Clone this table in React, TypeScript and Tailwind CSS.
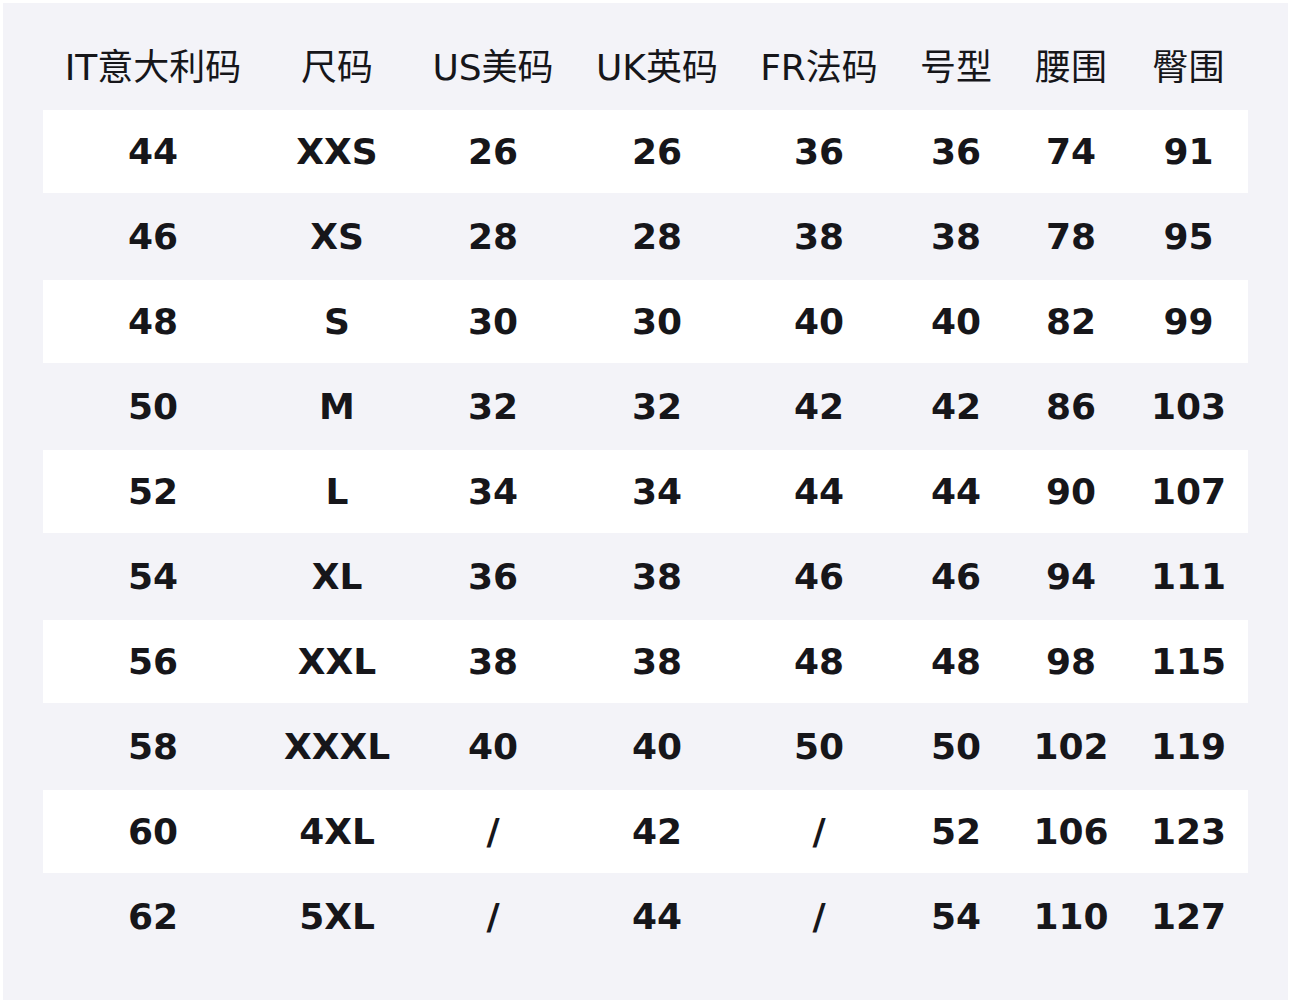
const headers = ["IT意大利码", "尺码", "US美码", "UK英码", "FR法码", "号型", "腰围", "臀围"];

const rows: string[][] = [
  ["44", "XXS", "26", "26", "36", "36", "74", "91"],
  ["46", "XS", "28", "28", "38", "38", "78", "95"],
  ["48", "S", "30", "30", "40", "40", "82", "99"],
  ["50", "M", "32", "32", "42", "42", "86", "103"],
  ["52", "L", "34", "34", "44", "44", "90", "107"],
  ["54", "XL", "36", "38", "46", "46", "94", "111"],
  ["56", "XXL", "38", "38", "48", "48", "98", "115"],
  ["58", "XXXL", "40", "40", "50", "50", "102", "119"],
  ["60", "4XL", "/", "42", "/", "52", "106", "123"],
  ["62", "5XL", "/", "44", "/", "54", "110", "127"],
];

const cols = "grid grid-cols-[220px_148px_164px_164px_160px_114px_116px_119px]";

// Size chart table
export default function App() {
  return (
    <div className="w-[1291px] h-[1003px] bg-white p-[3px] font-['DejaVu_Sans','Noto_Sans_CJK_SC',sans-serif] text-[#16161a]">
      <div className="h-full bg-[#f3f3f8] px-[40px] pt-[22px]">
        <div className={`${cols} h-[85px] items-center text-[36px] font-normal`}>
          {headers.map((h) => (
            <div key={h} className="text-center leading-none">
              {h}
            </div>
          ))}
        </div>
        {rows.map((r, i) => (
          <div
            key={r[0]}
            className={`${cols} h-[83px] mb-[2px] items-center text-[36px] font-bold ${
              i % 2 === 0 ? "bg-white" : ""
            }`}
          >
            {r.map((c, j) => (
              <div key={j} className="text-center leading-none">
                {c}
              </div>
            ))}
          </div>
        ))}
      </div>
    </div>
  );
}
